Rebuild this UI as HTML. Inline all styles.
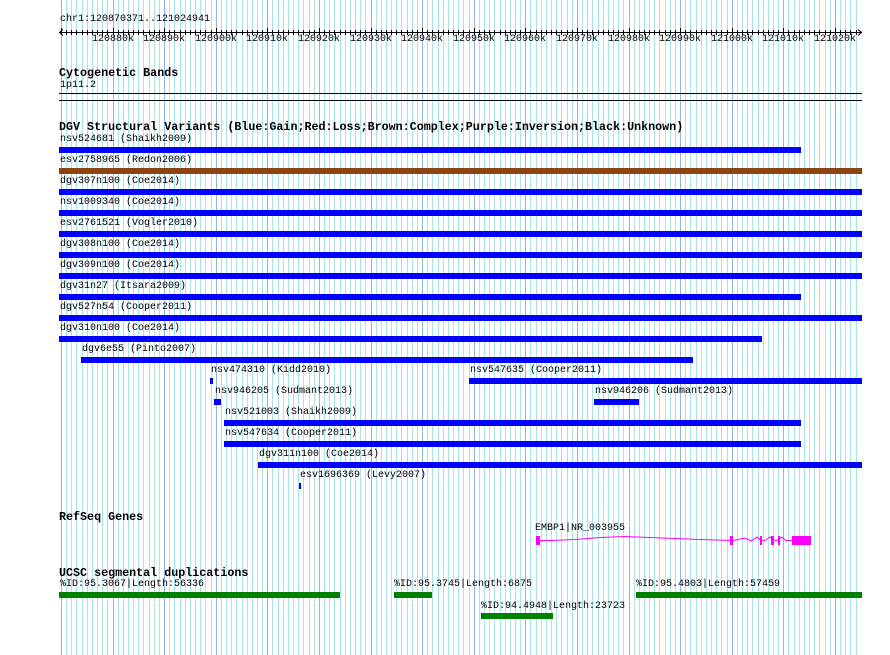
<!DOCTYPE html>
<html><head><meta charset="utf-8"><style>
body{margin:0;background:#fff;width:890px;height:655px;overflow:hidden;position:relative;font-family:"Liberation Mono",monospace;}
svg{position:absolute;left:0;top:0}
.t{position:absolute;font-size:10px;line-height:12px;color:#000;white-space:pre}
.h{position:absolute;font-size:11.7px;line-height:13px;font-weight:bold;white-space:pre}
.b{position:absolute;height:6px;background:#0000ff}
</style></head><body>
<svg id="g" width="890" height="655"></svg>
<div class="t" style="left:60px;top:14px">chr1:120870371..121024941</div>
<div id="lab"></div>
<div class="h" style="left:59px;top:67px">Cytogenetic Bands</div>
<div class="t" style="left:60px;top:80px">1p11.2</div>
<div class="h" style="left:59px;top:121px">DGV Structural Variants (Blue:Gain;Red:Loss;Brown:Complex;Purple:Inversion;Black:Unknown)</div>
<div id="tr"></div>
<div class="h" style="left:59px;top:511px">RefSeq Genes</div>
<div class="t" style="left:535px;top:523px">EMBP1|NR_003955</div>
<div class="h" style="left:59px;top:567px">UCSC segmental duplications</div>
<div class="t" style="left:60px;top:579px">%ID:95.3067|Length:56336</div>
<div class="t" style="left:394px;top:579px">%ID:95.3745|Length:6875</div>
<div class="t" style="left:636px;top:579px">%ID:95.4803|Length:57459</div>
<div class="t" style="left:481px;top:601px">%ID:94.4948|Length:23723</div>
<div class="b" style="left:59px;top:592px;width:281px;background:#008000"></div>
<div class="b" style="left:394px;top:592px;width:38px;background:#008000"></div>
<div class="b" style="left:636px;top:592px;width:226px;background:#008000"></div>
<div class="b" style="left:481px;top:613px;width:72px;background:#008000"></div>
<script>
var g=document.getElementById('g'),s='';
function X(kb){return 731.7+(kb-121000)*5.16;}
for(var k=120870;k<=121024;k++){var x=Math.round(X(k))+0.5;var maj=k%10==0;
s+='<line x1="'+x+'" y1="0" x2="'+x+'" y2="655" stroke="'+(maj?'#8ab8e8':'#a8e4ec')+'" stroke-width="1"/>';
s+='<line x1="'+x+'" y1="'+(maj?28:30)+'" x2="'+x+'" y2="35" stroke="#000"/>';}
s+='<line x1="59" y1="32.5" x2="862" y2="32.5" stroke="#000"/>';
s+='<path d="M63 29.5L59.5 32.5L63 35.5M858 29.5L861.5 32.5L858 35.5" fill="none" stroke="#000"/>';
s+='<line x1="59" y1="93.5" x2="862" y2="93.5" stroke="#000"/><line x1="59" y1="100.5" x2="862" y2="100.5" stroke="#000"/>';
// gene
s+='<path d="M538 540.5L550 540.5L575 539.5L600 537.5L625 536.5L650 537.5L675 538.5L700 539.5L733 540.5L745 538L751 541L757 537L761 540.5L765 540.5L770 537L776 541L782 537L786 540.5L795 540.5" fill="none" stroke="#ff00ff"/>';
s+='<rect x="536" y="536" width="4" height="9" fill="#ff00ff"/><rect x="730" y="536" width="3" height="9" fill="#ff00ff"/><rect x="760" y="536" width="2" height="9" fill="#ff00ff"/><rect x="771" y="536" width="3" height="9" fill="#ff00ff"/><rect x="778" y="536" width="2" height="9" fill="#ff00ff"/><rect x="792" y="536" width="19" height="9" fill="#ff00ff"/>';
g.innerHTML=s;
var L='';var labs=[[120880,'120880k'],[120890,'120890k'],[120900,'120900k'],[120910,'120910k'],[120920,'120920k'],[120930,'120930k'],[120940,'120940k'],[120950,'120950k'],[120960,'120960k'],[120970,'120970k'],[120980,'120980k'],[120990,'120990k'],[121000,'121000k'],[121010,'121010k'],[121020,'121020k']];
labs.forEach(function(a){L+='<div class="t" style="left:'+Math.round(X(a[0])-21)+'px;top:34px">'+a[1]+'</div>';});
document.getElementById('lab').innerHTML=L;
var T=[[59,140,'nsv524681 (Shaikh2009)',59,801,'#0000ff'],[59,161,'esv2758965 (Redon2006)',59,862,'#8b4513'],[59,182,'dgv307n100 (Coe2014)',59,862],[59,203,'nsv1009340 (Coe2014)',59,862],[59,224,'esv2761521 (Vogler2010)',59,862],[59,245,'dgv308n100 (Coe2014)',59,862],[59,266,'dgv309n100 (Coe2014)',59,862],[59,287,'dgv31n27 (Itsara2009)',59,801],[59,308,'dgv527n54 (Cooper2011)',59,862],[59,329,'dgv310n100 (Coe2014)',59,762],[81,350,'dgv6e55 (Pinto2007)',81,693],[210,371,'nsv474310 (Kidd2010)',210,213],[469,371,'nsv547635 (Cooper2011)',469,862],[214,392,'nsv946205 (Sudmant2013)',214,221],[594,392,'nsv946206 (Sudmant2013)',594,639],[224,413,'nsv521003 (Shaikh2009)',224,801],[224,434,'nsv547634 (Cooper2011)',224,801],[258,455,'dgv311n100 (Coe2014)',258,862],[299,476,'esv1696369 (Levy2007)',299,301]];
var R='';T.forEach(function(t){R+='<div class="t" style="left:'+(t[0]+1)+'px;top:'+(t[1]-6)+'px">'+t[2]+'</div><div class="b" style="left:'+t[3]+'px;top:'+(t[1]+7)+'px;width:'+(t[4]-t[3])+'px;background:'+(t[5]||'#0000ff')+'"></div>';});
document.getElementById('tr').innerHTML=R;
</script>
</body></html>
